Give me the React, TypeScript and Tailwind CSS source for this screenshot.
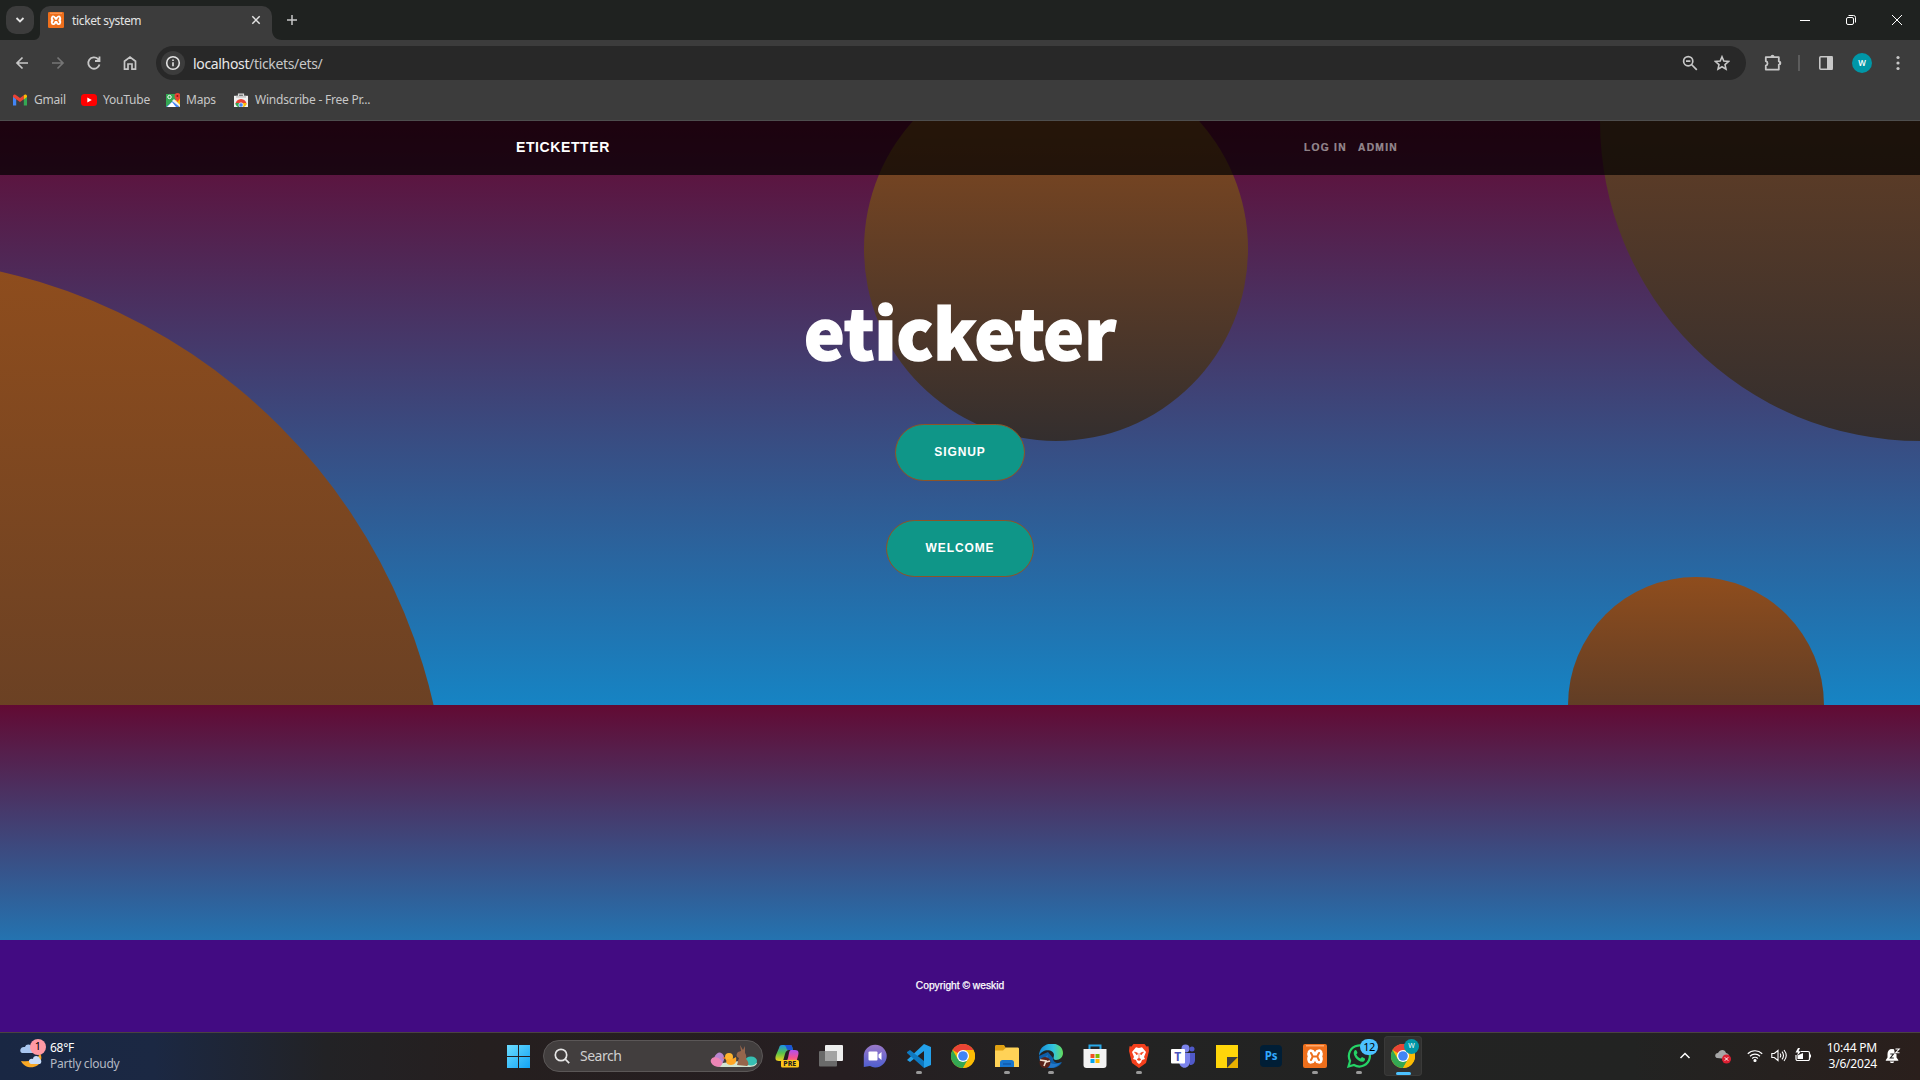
import type { ReactNode } from "react";

const ui = "font-['Noto_Sans']";

function XamppIcon({ className }: { className: string }) {
  return (
    <svg className={className} viewBox="0 0 24 24">
      <rect width="24" height="24" rx="2" fill="#ee6f1c" />
      <rect x="3" y="1" width="18" height="1.500" fill="#ffa76b" />
      <path
        d="M8 9c2.500 0 2 3.500 4 3.500s1.500-3.500 4-3.500M8 16c2.500 0 2-3.500 4-3.500s1.500 3.500 4 3.500M8 9c-.8 1.500 0 2.500 1 3.500-1 1-1.800 2-1 3.500M16 9c.8 1.500 0 2.500-1 3.500 1 1 1.800 2 1 3.500"
        fill="none"
        stroke="#fff"
        strokeWidth="7"
        strokeLinecap="round"
        strokeLinejoin="round"
      />
      <path d="M12 5v2.500M12 17.500V20" stroke="#ee6f1c" strokeWidth="1.500" />
      <path d="M8 9c.8 1.500 1.500 2.300 1.500 3.500S8.800 14.500 8 16M16 9c-.8 1.500-1.500 2.300-1.500 3.500s.7 2 1.500 3.500M9.500 12.500h5" fill="none" stroke="#ee6f1c" strokeWidth="2" strokeLinecap="round" />
    </svg>
  );
}

function ChromeLogo({ className }: { className: string }) {
  return (
    <svg className={className} viewBox="0 0 24 24">
      <circle cx="12" cy="12" r="12" fill="#fbbc05" />
      <path d="M12 12 1.600 6A12 12 0 0 1 22.400 6H12z" fill="#ea4335" />
      <path d="M1.600 6A12 12 0 0 0 12 24l5.200-9L12 12 6.800 15z" fill="#34a853" />
      <path d="M22.400 6A12 12 0 0 1 12 24l5.200-9V6z" fill="#fbbc05" />
      <circle cx="12" cy="12" r="6" fill="#fff" />
      <circle cx="12" cy="12" r="4.800" fill="#4285f4" />
    </svg>
  );
}

function TabStrip() {
  return (
    <div className="flex h-10 shrink-0 bg-[#1f2220]">
      <div className="ml-1.5 mt-1.5 flex h-7 w-7 items-center justify-center rounded-[10px] bg-[#3c3c3c]">
        <svg className="h-3 w-3" viewBox="0 0 12 12" fill="none" stroke="#e3e3e3" strokeWidth="1.800">
          <path d="m2.500 4 3.500 3.500L9.500 4" />
        </svg>
      </div>
      <svg className="mt-[30px] h-2.5 w-1.5" viewBox="0 0 6 10">
        <path d="M0 10c3.500 0 6-3 6-7v7z" fill="#3c3c3c" />
      </svg>
      <div className="mt-1.5 flex h-[34px] w-[232px] items-start rounded-t-[10px] bg-[#3c3c3c] pl-2 pt-1.5">
        <XamppIcon className="h-4 w-4" />
        <span className={`${ui} ml-2 mt-px flex-1 text-[12px] leading-4 tracking-[-0.35px] text-[#e3e3e3]`}>ticket system</span>
        <svg className="mr-2.5 mt-0.5 h-3 w-3" viewBox="0 0 12 12" stroke="#e3e3e3" strokeWidth="1.500">
          <path d="m2.300 2.300 7.400 7.400m0-7.400L2.300 9.700" />
        </svg>
      </div>
      <svg className="mt-[30px] h-2.5 w-2.5" viewBox="0 0 10 10">
        <path d="M0 0c0 6 4 10 10 10H0z" fill="#3c3c3c" />
      </svg>
      <svg className="ml-1 mt-3.5 h-3 w-3" viewBox="0 0 12 12" stroke="#c7c7c7" strokeWidth="1.500">
        <path d="M6 1v10M1 6h10" />
      </svg>
      <div className="flex-1" />
      <svg className="mt-3.5 h-3 w-3" viewBox="0 0 12 12" stroke="#fff">
        <path d="M1 6.500h10" />
      </svg>
      <svg className="ml-[34px] mt-3.5 h-3 w-3" viewBox="0 0 12 12" fill="none" stroke="#fff">
        <rect x="1.500" y="3.500" width="7" height="7" rx="1.500" />
        <path d="M3.500 1.500h5a2 2 0 0 1 2 2v5" />
      </svg>
      <svg className="ml-[34px] mr-[17px] mt-3.5 h-3 w-3" viewBox="0 0 12 12" stroke="#fff">
        <path d="m1 1 10 10m0-10L1 11" />
      </svg>
    </div>
  );
}

function Toolbar() {
  return (
    <div className="flex h-[46px] shrink-0 items-center">
      <svg className="ml-3.5 h-4 w-4" viewBox="0 0 16 16" fill="none" stroke="#c7c7c7" strokeWidth="1.700">
        <path d="M14 8H3m5.500-5.500L3 8l5.500 5.500" />
      </svg>
      <svg className="ml-5 h-4 w-4" viewBox="0 0 16 16" fill="none" stroke="#757575" strokeWidth="1.700">
        <path d="M2 8h11M7.500 2.500 13 8l-5.500 5.500" />
      </svg>
      <svg className="ml-5 h-4 w-4" viewBox="0 0 16 16" fill="none" stroke="#c7c7c7" strokeWidth="1.800">
        <path d="M13.500 9.500A5.700 5.700 0 1 1 12 4l1.500 1.500M13.500 1.500V6H9" />
      </svg>
      <svg className="ml-5 h-4 w-4" viewBox="0 0 16 16" fill="none" stroke="#c7c7c7" strokeWidth="1.700">
        <path d="M2.500 6.200 8 2l5.500 4.200v7.900H10V9H6v5.100H2.500z" />
      </svg>
      <div className="ml-[18px] flex h-[34px] w-[1590px] items-center rounded-full bg-[#282828]">
        <div className="ml-[5px] flex h-6 w-6 items-center justify-center rounded-full bg-[#3c3c3c]">
          <svg className="h-4 w-4" viewBox="0 0 16 16" fill="none" stroke="#e3e3e3" strokeWidth="1.600">
            <circle cx="8" cy="8" r="6.300" />
            <path d="M8 7.300v4M8 4.500v1.600" />
          </svg>
        </div>
        <span className={`${ui} ml-2 flex-1 text-[14px] tracking-[-0.34px] text-[#c7c7c7]`}>
          <span className="text-[#e8e8e8]">localhost</span>/tickets/ets/
        </span>
        <svg className="h-4 w-4" viewBox="0 0 16 16" fill="none" stroke="#c7c7c7" strokeWidth="1.700">
          <circle cx="6.200" cy="6.200" r="4.600" />
          <path d="m9.500 9.500 5.300 5.300M4 6.200h4.400" />
        </svg>
        <svg className="ml-4 mr-4 h-4 w-4" viewBox="0 0 16 16" fill="none" stroke="#c7c7c7" strokeWidth="1.600">
          <path d="m8 1.800 1.800 4.300 4.700.4L11 9.600l1 4.600-4-2.400-4 2.400 1-4.600-3.500-3.100 4.700-.4z" />
        </svg>
      </div>
      <svg className="ml-[18px] h-[18px] w-[18px]" viewBox="0 0 18 18">
        <path d="M1.800 3.200h13v4.200c2 0 2 3.200 0 3.200v5h-13v-4c2.300-.6 2.300-3.800 0-4.400z" fill="none" stroke="#c7c7c7" strokeWidth="1.800" strokeLinejoin="round" />
        <path d="M6.500 3c0-3 4-3 4 0zM15 7c3 0 3 4 0 4z" fill="#c7c7c7" />
      </svg>
      <div className="ml-4 h-4 w-0.5 bg-[#5c5c5c]" />
      <svg className="ml-[18px] h-4 w-4" viewBox="0 0 16 16">
        <rect x="1.800" y="1.800" width="12.400" height="12.400" rx="1" fill="none" stroke="#c7c7c7" strokeWidth="1.600" />
        <path d="M9 1h5.500v14H9z" fill="#c7c7c7" />
      </svg>
      <div className="ml-[18px] flex h-5 w-5 items-center justify-center rounded-full bg-[#0097a7] font-['Noto_Sans'] text-[8px] font-semibold text-white">W</div>
      <svg className="ml-[18px] h-4 w-4" viewBox="0 0 16 16" fill="#c7c7c7">
        <circle cx="8" cy="2.500" r="1.600" />
        <circle cx="8" cy="8" r="1.600" />
        <circle cx="8" cy="13.500" r="1.600" />
      </svg>
    </div>
  );
}

function Bookmark({ icon, label, width }: { icon: ReactNode; label: string; width: string }) {
  return (
    <div className={`flex items-center ${width}`}>
      {icon}
      <span className={`${ui} whitespace-nowrap text-[12px] tracking-[-0.22px] text-[#c7c7c7]`}>{label}</span>
    </div>
  );
}

function Bookmarks() {
  return (
    <div className="flex h-[35px] shrink-0 items-start border-b border-[#4e4e4e] pl-[13px] pt-[5px]">
      <Bookmark
        width="w-[68px]"
        label="Gmail"
        icon={
          <svg className="mr-[7px] h-3.5 w-3.5" viewBox="0 0 14 14">
            <path d="M0 3v9.500h3.200V6z" fill="#4285f4" />
            <path d="M14 3v9.500h-3.200V6z" fill="#34a853" />
            <path d="M0 3.500c0-2 2-2.400 3.200-1.300L7 5.100l3.800-2.900v4L7 9.100 0 4z" fill="#ea4335" />
            <path d="M10.800 2.200C12 1.100 14 1.500 14 3.500V4l-3.200 2.400z" fill="#fbbc04" />
          </svg>
        }
      />
      <Bookmark
        width="w-[85px]"
        label="YouTube"
        icon={
          <svg className="mr-1.5 h-3 w-4" viewBox="0 0 16 12">
            <rect width="16" height="12" rx="3.500" fill="#f00" />
            <path d="m6.300 3.500 4.500 2.500-4.500 2.500z" fill="#fff" />
          </svg>
        }
      />
      <Bookmark
        width="w-[68px]"
        label="Maps"
        icon={
          <svg className="mr-1.5 h-3.5 w-3.5" viewBox="0 0 14 14">
            <path d="M0 1h14v13H0z" fill="#34a853" />
            <path d="m0 14 8-7 6 7z" fill="#4285f4" />
            <path d="m1 14 5-5 4 5z" fill="#fff" />
            <path d="M8 7.500 13.500 14H14V5z" fill="#fbbc04" />
            <path d="m6 8 2-2 6 6v2z" fill="#eee" />
            <path d="M11.500 9C10 6.500 8.500 5.500 8.500 3a3 3 0 0 1 6 0c0 2.500-1.500 3.500-3 6z" fill="#ea4335" />
            <circle cx="3.500" cy="4" r="1.700" fill="none" stroke="#fff" />
            <circle cx="11.400" cy="3" r="1" fill="#8b1a12" />
          </svg>
        }
      />
      <Bookmark
        width="w-[150px]"
        label="Windscribe - Free Pr..."
        icon={
          <svg className="mr-[7px] h-3.5 w-3.5" viewBox="0 0 14 14">
            <path d="M4.500 3V1.200h5V3" fill="none" stroke="#ddd" strokeWidth="1.200" />
            <path d="M0 2.800h14V14H0z" fill="#f1f1f1" />
            <path d="M2 2.800h10v2H2z" fill="#ccc" />
            <path d="M1.500 11.500a5.500 5.500 0 0 1 11 0z" fill="#ea4335" />
            <path d="M1.500 10c0 2 1 3.300 2.500 4h3l-2-4z" fill="#34a853" />
            <path d="M12.500 10c0 2-1 3.300-2.500 4H7l2-4z" fill="#fbbc04" />
            <circle cx="7" cy="12" r="2.200" fill="#4285f4" stroke="#fff" strokeWidth=".7" />
          </svg>
        }
      />
    </div>
  );
}

const circle = "absolute rounded-full bg-[linear-gradient(0deg,#332e2e_0%,#8f4d1d_100%)]";
const heroButton =
  "relative mt-[39px] flex h-[57px] items-center justify-center rounded-full border border-[#8d5428] bg-[#0f9688] pb-0.5 font-['Liberation_Sans'] text-[12px] font-bold tracking-[0.9px] text-white";

function Hero() {
  return (
    <header className="relative flex h-[584px] shrink-0 flex-col items-center overflow-hidden bg-[linear-gradient(180deg,#620a33_0%,#1684c4_100%)]">
      <div className={`${circle} -bottom-[704px] -left-[704px] h-[1152px] w-[1152px]`} />
      <div className={`${circle} -right-80 -top-80 h-[640px] w-[640px]`} />
      <div className={`${circle} -bottom-32 right-24 h-64 w-64`} />
      <div className={`${circle} -top-16 right-[672px] h-96 w-96`} />
      <nav className="relative flex h-[54px] w-full shrink-0 justify-center bg-black/70 font-['Liberation_Sans'] font-bold">
        <div className="flex w-[890px] items-center justify-between pb-px pl-px pr-[7px]">
          <span className="text-[14px] tracking-[0.6px] text-white">ETICKETTER</span>
          <span className="flex gap-[11px] text-[10.240px] tracking-[1.3px] text-white/50 [-webkit-text-stroke:0.2px]">
            <span>LOG IN</span>
            <span>ADMIN</span>
          </span>
        </div>
      </nav>
      <h1 className="relative mb-0.5 mt-[104px] font-['Noto_Sans_CJK_SC',sans-serif] text-[68.500px] font-black leading-[104px] text-white [-webkit-text-stroke:1.500px_white]">eticketer</h1>
      <a className={`${heroButton} w-[130px]`}>SIGNUP</a>
      <a className={`${heroButton} w-[148px]`}>WELCOME</a>
    </header>
  );
}

function TaskIcon({ children, dot = false, active = false }: { children: ReactNode; dot?: boolean; active?: boolean }) {
  return (
    <div className={active ? "relative mx-[3px] flex h-10 w-[38px] items-center justify-center rounded bg-[#313130] ring-1 ring-inset ring-[#3a3a39]" : "relative flex h-10 w-11 items-center justify-center"}>
      {children}
      {dot && <i className="absolute bottom-0.5 h-[3px] w-1.5 rounded-full bg-[#999]" />}
      {active && <i className="absolute bottom-px h-[3px] w-[15px] rounded-full bg-[#4cc2ff]" />}
    </div>
  );
}

function Search() {
  return (
    <div className="ml-[13px] mr-0.5 flex h-8 w-[220px] items-center rounded-full border border-[#5b5757] bg-[#423e3e]">
      <svg className="ml-2.5 h-4 w-4" viewBox="0 0 16 16" fill="none" stroke="#e6e6e6" strokeWidth="1.700">
        <circle cx="7" cy="7" r="5.700" />
        <path d="m11.200 11.200 4 4" />
      </svg>
      <span className={`${ui} ml-2.5 flex-1 pb-px text-[14px] tracking-[-0.5px] text-[#cfcfcf]`}>Search</span>
      <svg className="mr-[5px] h-6 w-[47px]" viewBox="0 0 47 24">
        <path d="M6 22c4-5 36-6 41-3-1 3-4 4-9 4H11z" fill="#d4e5d2" />
        <ellipse cx="9" cy="15" rx="5" ry="6.500" fill="#b985cf" transform="rotate(15 9 15)" />
        <ellipse cx="6.500" cy="18" rx="6" ry="4.500" fill="#ed85b6" transform="rotate(25 6.500 18)" />
        <circle cx="19" cy="13" r="4" fill="#ffb52e" />
        <path d="M17 15c3 1 6 0 9-2 1 5-1 8-5 8s-6-3-4-6z" fill="#ffa726" />
        <path d="m15 13-3 1 3 1z" fill="#ed7021" />
        <ellipse cx="41" cy="17" rx="6" ry="4.500" fill="#36bfb2" />
        <path d="M27 21c1-3 1-5 2-7-3-1-3-4-1-6l3-1-1-6 3 5 2-4v7c2 3 1 5 1 6 3 3 3 6 1 7z" fill="#96664c" />
      </svg>
    </div>
  );
}

function Taskbar() {
  return (
    <footer className="flex h-12 shrink-0 items-center border-t border-[#4a4340] bg-[linear-gradient(90deg,#192743_0%,#1b2843_8%,#222225_17%,#251f1f_25%,#261e21_44%,#232323_55%,#222322_85%,#2a1f1c_100%)] pb-px">
      <div className="flex w-[496px] items-center pb-px pl-[18px]">
        <div className="relative mt-0.5 h-8 w-8">
          <svg className="-ml-px h-8 w-8" viewBox="0 0 32 32">
            <path d="M5 12h11a3 3 0 0 0-1-5c0-4-6-5-7-1-5-1-6 5-3 6z" fill="#a9c6ef" />
            <path d="M22 11c1 7-5 10-18 9 4 9 18 8 20-1 1-3 0-6-2-8z" fill="#f9a825" />
            <path d="M14 23h9a3 3 0 0 0 0-5c-1-4-7-4-7 0-5-1-5 4-2 5z" fill="#c8dcf8" />
          </svg>
          <span className="absolute -top-0.5 left-3 flex h-4 w-4 items-center justify-center rounded-full bg-[#ff99a4] font-['Noto_Sans'] text-[11px] text-black">1</span>
        </div>
        <div className={`${ui} text-[12px] leading-4 tracking-[-0.25px] text-[#b4bac4]`}>
          <div className="text-white">68°F</div>
          <div>Partly cloudy</div>
        </div>
      </div>
      <svg className="ml-[11px] h-[23px] w-[23px]" viewBox="0 0 23 23">
        <defs>
          <linearGradient id="win" x1="0" y1="0" x2="1" y2="1" gradientUnits="objectBoundingBox">
            <stop stopColor="#6bdcff" />
            <stop offset="1" stopColor="#12a3f5" />
          </linearGradient>
        </defs>
        <path d="M0 0h11v11H0zM12 0h11v11H12zM0 12h11v11H0zM12 12h11v11H12z" fill="url(#win)" />
      </svg>
      <Search />
      <TaskIcon>
        <svg className="h-6 w-6" viewBox="0 0 24 24">
          <defs>
            <linearGradient id="cpA" x1="0" y1="0" x2="0" y2="1">
              <stop stopColor="#1b93e8" />
              <stop offset=".5" stopColor="#58c24a" />
              <stop offset="1" stopColor="#f3d31c" />
            </linearGradient>
            <linearGradient id="cpB" x1="0" y1="0" x2="0" y2="1">
              <stop stopColor="#b04ff0" />
              <stop offset=".6" stopColor="#f5528e" />
              <stop offset="1" stopColor="#ff9a42" />
            </linearGradient>
          </defs>
          <path d="M7 1h8c2 0 2 1 3 5h-4c-2 0-3 1-4 4l-2 7H4c-4 0-4-3-3-6L4 4c.5-2 1-3 3-3z" fill="url(#cpA)" />
          <path d="M9 1h6c2 0 2 1 3 5h-5c-2 0-1-4-4-5z" fill="#1a55d8" />
          <path d="M16 6h4c4 0 4 3 3 6l-2 7H9c2 0 3-2 4-5l1-5c.5-2 1-3 2-3z" fill="url(#cpB)" />
          <rect x="6" y="16" width="18" height="7.500" rx="1.500" fill="#ffc61a" />
          <text x="8.300" y="22.300" fontSize="7" fontWeight="800" fontFamily="Noto Sans" fill="#222">PRE</text>
        </svg>
      </TaskIcon>
      <TaskIcon>
        <svg className="h-6 w-6" viewBox="0 0 24 24">
          <rect x="6" y="1" width="18" height="16" rx="1" fill="#eee" />
          <rect y="7" width="18" height="15.500" rx="1" fill="#6a6a6a" />
          <path d="M6 7h12v10H6z" fill="#a3a3a3" />
        </svg>
      </TaskIcon>
      <TaskIcon>
        <svg className="h-6 w-6" viewBox="0 0 24 24">
          <defs>
            <linearGradient id="chat" x1="0" y1="0" x2="0" y2="1">
              <stop stopColor="#9a78c8" />
              <stop offset="1" stopColor="#4f5fd0" />
            </linearGradient>
          </defs>
          <path d="M12 .8a11.300 11.300 0 1 1-5 21.200L.8 23V12A11.300 11.300 0 0 1 12 .8z" fill="url(#chat)" />
          <rect x="5.500" y="7.500" width="9" height="9" rx="1" fill="#fff" />
          <path d="m15.500 10.500 3-2.500v8l-3-2.500z" fill="#fff" />
        </svg>
      </TaskIcon>
      <TaskIcon dot>
        <svg className="h-6 w-6" viewBox="0 0 24 24">
          <path d="m17 0 7 3v18l-7 3V7L3 18l-3-2L17 0z" fill="#23a0ea" />
          <path d="m0 8 3-2 14 11v7L0 9z" fill="#0d78c0" />
        </svg>
      </TaskIcon>
      <TaskIcon><ChromeLogo className="h-6 w-6" /></TaskIcon>
      <TaskIcon dot>
        <svg className="h-6 w-6" viewBox="0 0 24 24">
          <path d="M0 2.500C0 1.500.5 1 1.500 1H9l2 3-3 4H0z" fill="#e0a112" />
          <path d="M0 6.500h8l3-3h11.500c1 0 1.500.5 1.500 1.500V23H0z" fill="#ffd257" />
          <path d="M5 23v-4.500c0-1.500 1-2.500 2.500-2.500h9c1.500 0 2.500 1 2.500 2.500V23z" fill="#1875ce" />
          <path d="M8 20h8" stroke="#0c4d9b" />
        </svg>
      </TaskIcon>
      <TaskIcon dot>
        <svg className="h-6 w-6" viewBox="0 0 24 24">
          <defs>
            <linearGradient id="edge">
              <stop stopColor="#1689d8" />
              <stop offset=".6" stopColor="#31c4df" />
              <stop offset="1" stopColor="#64dc5a" />
            </linearGradient>
          </defs>
          <path d="M0 12c0 7 5 12 12 12 5 0 9-2 11-6-4 2-9 1-9-4L9 8z" fill="#0f5ea8" />
          <path d="M0 12C0-4 24-4 24 9c0 4-3 7-7 7-4-1-2-3-2-5 0-6-12-7-15 1z" fill="url(#edge)" />
          <path d="M9 11c-2 7 5 12 13 7-4 6-12 8-16 3-3-4-1-8 3-10z" fill="#2178cc" />
          <circle cx="6" cy="18.500" r="5.500" fill="#5a231a" />
          <path d="m1 16 6 1-2 5m2-4 4-1" stroke="#f3e1d0" strokeWidth="1.600" fill="none" />
        </svg>
      </TaskIcon>
      <TaskIcon>
        <svg className="h-6 w-6" viewBox="0 0 24 24">
          <path d="M6.500 6V1.500h11V6" fill="none" stroke="#28a8e8" strokeWidth="2" />
          <path d="M.5 5h23v16c0 2-1 3-3 3h-17c-2 0-3-1-3-3z" fill="#f2f2f2" />
          <path d="M7.500 10h4v4h-4z" fill="#f25022" />
          <path d="M12.500 10h4v4h-4z" fill="#7fba00" />
          <path d="M7.500 15h4v4h-4z" fill="#00a4ef" />
          <path d="M12.500 15h4v4h-4z" fill="#ffb900" />
        </svg>
      </TaskIcon>
      <TaskIcon dot>
        <svg className="h-6 w-6" viewBox="0 0 24 24">
          <path d="M6.500 0h11l2 2.500 2-.3L22 7l-3 12-7 5-7-5L2 7l.5-4.800 2 .3z" fill="#f5401d" />
          <path d="m12 4 3-.7L19 8l-2 5 1 2-3 1-1 2.500-2 1.500-2-1.500L9 16l-3-1 1-2-2-5 4-4.700z" fill="#fff" />
          <path d="m7.500 8 3 1-.5 2zm9 0-3 1 .5 2zM12 9v5l-2 1.500 2 1 2-1-2-1.500" fill="#f5401d" stroke="#f5401d" strokeWidth=".6" />
        </svg>
      </TaskIcon>
      <TaskIcon>
        <svg className="h-6 w-6" viewBox="0 0 24 24">
          <circle cx="14.500" cy="4.500" r="4" fill="#7b83eb" />
          <circle cx="21" cy="5" r="2.500" fill="#5059c9" />
          <path d="M16 9h8v7c0 3-2 5-5 5z" fill="#5059c9" />
          <path d="M8 9h11v8c0 9-11 9-11 0z" fill="#7b83eb" />
          <rect y="5" width="14" height="14.500" rx="1" fill="#fff" />
          <text x="3.300" y="16.700" fontFamily="Noto Sans" fontSize="12" fontWeight="700" fill="#4b53bc">T</text>
        </svg>
      </TaskIcon>
      <TaskIcon>
        <svg className="h-6 w-6" viewBox="0 0 24 24">
          <path d="M1 1h22v12L12 24H1z" fill="#ffd60a" />
          <path d="M12 13h11L12 24z" fill="#3d3d3d" />
          <path d="m23 13-11 11h11z" fill="#eab000" />
        </svg>
      </TaskIcon>
      <TaskIcon>
        <div className="flex h-[22px] w-[22px] items-center justify-center rounded-[4px] bg-[#001e36] font-['Noto_Sans'] text-[11.500px] font-bold tracking-[-0.3px] text-[#31a8ff]">Ps</div>
      </TaskIcon>
      <TaskIcon dot><XamppIcon className="h-6 w-6" /></TaskIcon>
      <TaskIcon dot>
        <svg className="h-6 w-6" viewBox="0 0 24 24">
          <path d="m1.500 22.500 1.600-5.600A10.500 10.500 0 1 1 7 21z" fill="none" stroke="#25d366" strokeWidth="2.200" />
          <path d="M7.500 6.500c1-1 2-.5 2.500 1l.5 1.500-1.200 1.500c1 2 2.300 3 4.200 4l1.500-1.500 2.500 1.200c1 .5.500 2-.5 3-4 3-13-6-9.500-10.700z" fill="#25d366" />
        </svg>
        <span className="absolute right-[3px] top-[3px] flex h-4 w-[18px] items-center justify-center rounded-full bg-[#4cc2ff] font-['Noto_Sans'] text-[11px] tracking-[-0.5px] text-black">12</span>
      </TaskIcon>
      <TaskIcon active>
        <ChromeLogo className="h-6 w-6" />
        <span className="absolute right-[3px] top-[3px] flex h-[15px] w-[15px] items-center justify-center rounded-full bg-[#0097a7] font-['Noto_Sans'] text-[7px] text-white">W</span>
      </TaskIcon>
      <div className="flex-1" />
      <svg className="mr-6 h-3 w-3" viewBox="0 0 12 12" fill="none" stroke="#fff" strokeWidth="1.500">
        <path d="m1.500 8 4.500-4.500L10.500 8" transform="translate(5 0) translate(-5 0)" />
      </svg>
      <svg className="mr-4 h-4 w-4" viewBox="0 0 16 16">
        <path d="M2 10c-3-1-2-5 1-5 2-4 7-4 8 0 4 1 4 5 1 6z" fill="#a6a6a6" />
        <circle cx="11.500" cy="11" r="4.500" fill="#dc1f32" />
        <path d="m9.800 9.300 3.400 3.400m0-3.400-3.400 3.400" stroke="#fff" />
      </svg>
      <svg className="mr-2 h-4 w-4" viewBox="0 0 16 16" fill="none" stroke="#fff" strokeWidth="1.200">
        <path d="M.8 5.700a10.300 10.300 0 0 1 14.400 0M3 8.200a7.200 7.200 0 0 1 10 0M5.200 10.500a4 4 0 0 1 5.600 0" />
        <circle cx="8" cy="12.500" r="1" fill="#fff" />
      </svg>
      <svg className="mr-2 h-4 w-4" viewBox="0 0 16 16" fill="none" stroke="#fff" strokeWidth="1.100">
        <path d="M.8 5.500v4h2.500L7 12.500v-10L3.300 5.500zM9 5.500q1.500 2 0 4M11 3.700q3 3.800 0 7.600M13 2q4.500 5.500 0 11" />
      </svg>
      <svg className="mr-4 h-4 w-4" viewBox="0 0 16 16">
        <path d="M6 3.500h7A1.500 1.500 0 0 1 14.500 5v6a1.500 1.500 0 0 1-1.500 1.500H2.500A1.500 1.500 0 0 1 1 11V7" fill="none" stroke="#fff" strokeWidth="1.200" />
        <path d="M2.500 7.500 8 5v6H2.500zM15 6.500h1v3h-1z" fill="#fff" />
        <path d="M3 0 .5 4.500H3L2 8l4-4.800H3.500L5 0z" fill="#fff" />
      </svg>
      <div className={`${ui} text-right text-[12px] leading-4 tracking-[-0.2px] text-white`}>
        <div>10:44 PM</div>
        <div>3/6/2024</div>
      </div>
      <svg className="ml-2 mr-[19px] h-4 w-4" viewBox="0 0 16 16">
        <path d="M7 1C4 1 2.500 3 2.500 6v3.500L.8 12v.7h12.500V12l-1.800-2.500V6.500L9 1.300zM4.800 13.500h4.400c-.5 2-3.900 2-4.400 0z" fill="#fff" />
        <path d="M5.300 6h3.200L5.300 10h3.500" stroke="#222" fill="none" strokeWidth="1.100" />
        <path d="M9.500 0H15v5.500H9.500z" fill="#281f1d" />
        <path d="M10.500 1h3.700l-3.400 3.700h3.700" stroke="#fff" fill="none" strokeWidth="1.100" />
      </svg>
    </footer>
  );
}

export default function App() {
  return (
    <div className="flex h-screen w-[1920px] flex-col overflow-hidden bg-[#3c3c3c]">
      <TabStrip />
      <Toolbar />
      <Bookmarks />
      <Hero />
      <section className="h-[235px] shrink-0 bg-[linear-gradient(180deg,#620a33_0%,#2473b0_100%)]" />
      <section className="flex h-[92px] shrink-0 items-center justify-center bg-[#420b82] font-['Liberation_Sans'] text-[10.240px] text-white [-webkit-text-stroke:0.25px_white]">
        Copyright © weskid
      </section>
      <Taskbar />
    </div>
  );
}
